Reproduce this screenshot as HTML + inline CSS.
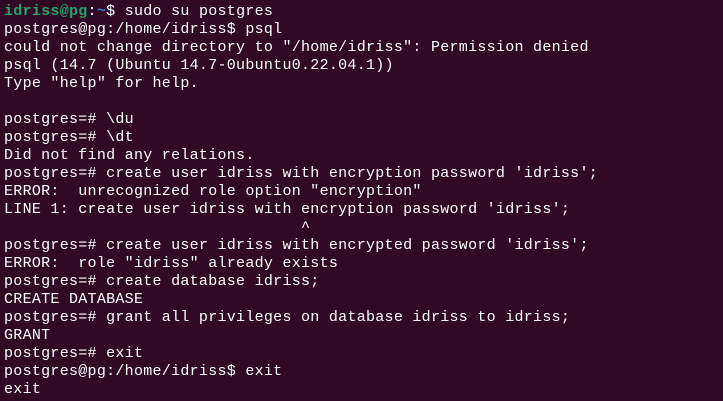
<!DOCTYPE html>
<html><head><style>
html,body{margin:0;padding:0;width:723px;height:401px;background:#300a24;overflow:hidden}
pre{margin:0;position:absolute;left:4px;top:3px;font-family:"Liberation Mono",monospace;font-size:15px;line-height:18px;color:#ffffff;letter-spacing:0.28px}
.g{color:#26a269;font-weight:bold}.b{color:#3b7ad0;font-weight:bold}
</style></head><body><pre><span class="g">idriss@pg</span>:<span class="b">~</span>$ sudo su postgres
postgres@pg:/home/idriss$ psql
could not change directory to "/home/idriss": Permission denied
psql (14.7 (Ubuntu 14.7-0ubuntu0.22.04.1))
Type "help" for help.

postgres=# \du
postgres=# \dt
Did not find any relations.
postgres=# create user idriss with encryption password 'idriss';
ERROR:  unrecognized role option "encryption"
LINE 1: create user idriss with encryption password 'idriss';
                                ^
postgres=# create user idriss with encrypted password 'idriss';
ERROR:  role "idriss" already exists
postgres=# create database idriss;
CREATE DATABASE
postgres=# grant all privileges on database idriss to idriss;
GRANT
postgres=# exit
postgres@pg:/home/idriss$ exit
exit</pre></body></html>
